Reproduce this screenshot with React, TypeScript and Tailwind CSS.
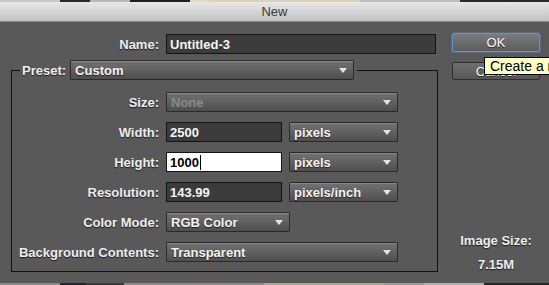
import React from "react";

const font = { fontFamily: '"Liberation Sans", Arial, sans-serif' };

function Arrow() {
  return (
    <svg width="8" height="5" viewBox="0 0 8 5" className="shrink-0">
      <path d="M0 0 H8 L4 5 Z" fill="#e4e4e4" />
    </svg>
  );
}

function Select({ w, value, muted }: { w: string; value: string; muted?: boolean }) {
  return (
    <div
      className={`${w} h-[20px] flex items-center justify-between pl-[4px] pr-[6px] border border-[#2a2a2a] rounded-[1px] bg-gradient-to-b from-[#727272] to-[#4f4f4f] shadow-[inset_0_1px_0_rgba(255,255,255,0.15)]`}
    >
      <span
        className={`text-[13px] font-bold leading-none ${muted ? "text-[#8a8a8a]" : "text-[#f4f4f4] [text-shadow:0_1px_1px_rgba(0,0,0,0.6)]"}`}
      >
        {value}
      </span>
      <Arrow />
    </div>
  );
}

function Input({ w, value, white }: { w: string; value: string; white?: boolean }) {
  return (
    <div
      className={`${w} h-[20px] flex items-center pl-[3px] border border-[#141414] ${white ? "bg-white" : "bg-[#3b3b3b]"}`}
    >
      <span className={`text-[13px] font-bold leading-none ${white ? "text-black" : "text-[#f4f4f4]"}`}>{value}</span>
      {white && <span className="w-px h-[15px] bg-black ml-px" />}
    </div>
  );
}

function Label({ children, w = "w-[147px]" }: { children: React.ReactNode; w?: string }) {
  return (
    <div className={`${w} shrink-0 text-right text-[13px] font-bold text-[#efefef] [text-shadow:0_1px_1px_rgba(0,0,0,0.7)] leading-none`}>
      {children}
    </div>
  );
}

function Row({ label, children }: { label: string; children: React.ReactNode }) {
  return (
    <div className="flex items-center gap-[7px] h-[20px]">
      <Label>{label}</Label>
      {children}
    </div>
  );
}

export default function App() {
  return (
    <div className="w-[549px] h-[285px] overflow-hidden relative flex flex-col bg-[#595959]" style={font}>
      <div className="h-[2px] flex shrink-0">
        <div className="w-[60px] bg-[#c9c9c9]" />
        <div className="w-[30px] bg-[#2a2a2a]" />
        <div className="w-[40px] bg-[#b8b8b8]" />
        <div className="w-[60px] bg-[#202020]" />
        <div className="w-[20px] bg-[#e0dcc0]" />
        <div className="w-[150px] bg-[#d8d4bc]" />
        <div className="w-[100px] bg-[#bdbdbd]" />
        <div className="flex-1 bg-[#2a2a2a]" />
      </div>
      <div className="h-[20px] shrink-0 flex items-center justify-center bg-gradient-to-b from-[#e8e8e8] to-[#c2c2c2] border-b border-[#8c8c8c]">
        <span className="text-[13px] text-[#3a3a3a] leading-none">New</span>
      </div>
      <div className="flex-1 flex">
        <div className="w-[440px] pt-[12px] flex flex-col">
          <div className="flex items-center gap-[7px] h-[20px]">
            <Label w="w-[159px]">Name:</Label>
            <Input w="w-[270px]" value="Untitled-3" />
          </div>
          <div className="mt-[16px] ml-[11px] w-[427px] border border-[#111] flex flex-col pb-[9px]">
            <div className="-mt-[11px] ml-[8px] self-start flex items-center gap-[4px] bg-[#595959] pl-[2px] pr-[3px]">
              <Label w="w-auto">Preset:</Label>
              <Select w="w-[284px]" value="Custom" />
            </div>
            <div className="mt-[12px] flex flex-col gap-[10px]">
              <Row label="Size:">
                <Select w="w-[232px]" value="None" muted />
              </Row>
              <Row label="Width:">
                <Input w="w-[116px]" value="2500" />
                <Select w="w-[109px]" value="pixels" />
              </Row>
              <Row label="Height:">
                <Input w="w-[116px]" value="1000" white />
                <Select w="w-[109px]" value="pixels" />
              </Row>
              <Row label="Resolution:">
                <Input w="w-[116px]" value="143.99" />
                <Select w="w-[109px]" value="pixels/inch" />
              </Row>
              <Row label="Color Mode:">
                <Select w="w-[124px]" value="RGB Color" />
              </Row>
              <Row label="Background Contents:">
                <Select w="w-[232px]" value="Transparent" />
              </Row>
            </div>
          </div>
        </div>
        <div className="ml-[12px] w-[88px] pt-[11px] flex flex-col">
          <div className="h-[19px] flex items-center justify-center rounded-[2px] border border-[#5d93dc] bg-gradient-to-b from-[#7c7c7c] to-[#5c5c5c] shadow-[0_0_0_1px_rgba(93,147,220,0.3)]">
            <span className="text-[13px] text-white leading-none [text-shadow:0_1px_1px_rgba(0,0,0,0.6)]">OK</span>
          </div>
          <div className="mt-[10px] h-[18px] flex items-center justify-center rounded-[2px] border border-[#2e2e2e] bg-gradient-to-b from-[#707070] to-[#585858]">
            <span className="text-[13px] text-white leading-none [text-shadow:0_1px_1px_rgba(0,0,0,0.6)]">Cancel</span>
          </div>
          <div className="mt-auto pb-[12px] flex flex-col items-center gap-[11px]">
            <span className="text-[13px] font-bold text-[#efefef] leading-none [text-shadow:0_1px_1px_rgba(0,0,0,0.7)]">Image Size:</span>
            <span className="text-[13px] font-bold text-[#efefef] leading-none [text-shadow:0_1px_1px_rgba(0,0,0,0.7)]">7.15M</span>
          </div>
        </div>
      </div>
      <div className="h-[2px] flex shrink-0">
        <div className="w-[60px] bg-[#8a8a8a]" />
        <div className="w-[26px] bg-[#1e2630]" />
        <div className="w-[38px] bg-[#3a3a3a]" />
        <div className="w-[140px] bg-[#8c8c84]" />
        <div className="w-[120px] bg-[#a8a892]" />
        <div className="w-[40px] bg-[#9a9a9a]" />
        <div className="w-[60px] bg-[#b0b0b0]" />
        <div className="flex-1 bg-[#262626]" />
      </div>
      <div className="absolute left-[484px] top-[57px] h-[18px] pl-[5px] pr-[6px] flex items-center border border-black bg-[#ffffc6] whitespace-nowrap">
        <span className="text-[14px] text-black leading-none">Create a new document</span>
      </div>
    </div>
  );
}
